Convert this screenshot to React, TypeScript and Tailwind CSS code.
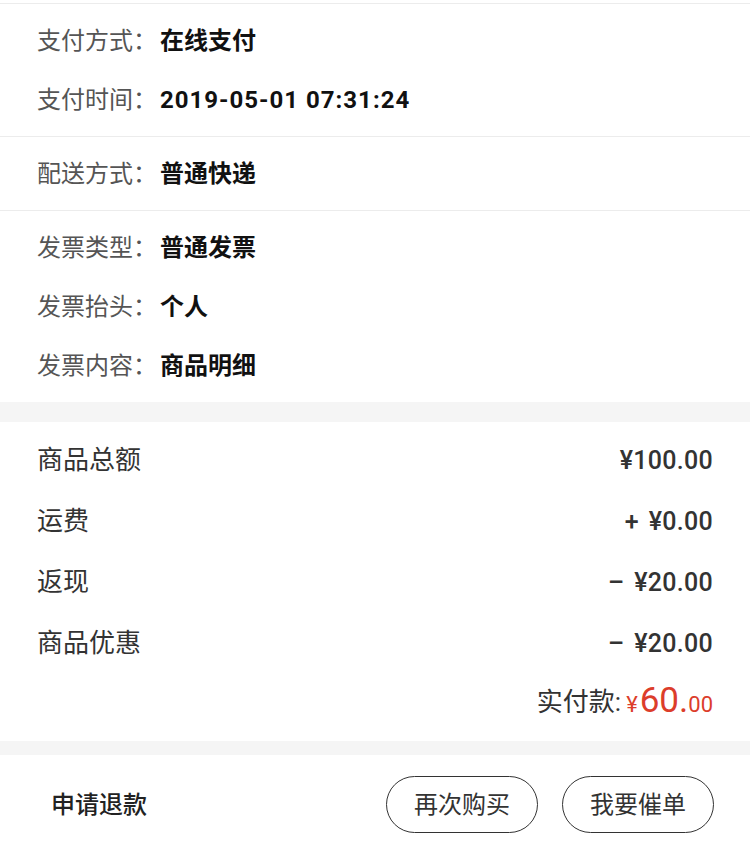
import React from 'react';

const font = { fontFamily: 'Roboto, "Noto Sans CJK SC", sans-serif' };

type Info = { label: string; value: string; mono?: boolean };

const groups: Info[][] = [
  [
    { label: '支付方式', value: '在线支付' },
    { label: '支付时间', value: '2019-05-01 07:31:24', mono: true },
  ],
  [{ label: '配送方式', value: '普通快递' }],
  [
    { label: '发票类型', value: '普通发票' },
    { label: '发票抬头', value: '个人' },
    { label: '发票内容', value: '商品明细' },
  ],
];

const prices = [
  { label: '商品总额', sign: '', value: '¥100.00' },
  { label: '运费', sign: '+', value: '¥0.00' },
  { label: '返现', sign: '–', value: '¥20.00' },
  { label: '商品优惠', sign: '–', value: '¥20.00' },
];

const App: React.FC = () => {
  return (
    <div className="w-[750px] h-[854px] bg-white overflow-hidden" style={font}>
      <div className="h-[3px]" />
      {groups.map((g, i) => (
        <div key={i} className="border-t border-[#ececec] py-[7px] px-[37px]">
          {g.map((row) => (
            <div key={row.label} className="h-[59px] flex items-center text-[24px]">
              <span className="w-[123px] shrink-0 text-[#555] whitespace-nowrap">{row.label}：</span>
              <span className={`text-[#111] font-bold ${row.mono ? 'tracking-[1px]' : ''}`}>{row.value}</span>
            </div>
          ))}
        </div>
      ))}

      <div className="h-[20px] bg-[#f5f5f5]" />

      <div className="pt-[8px] pb-[11px] px-[37px]">
        {prices.map((p) => (
          <div key={p.label} className="h-[61px] flex items-center justify-between text-[26px] text-[#333]">
            <span>{p.label}</span>
            <span className="font-medium text-[25px] flex items-center gap-[10px]">
              {p.sign && <span>{p.sign}</span>}
              <span className="tracking-[0.3px]">{p.value}</span>
            </span>
          </div>
        ))}
        <div className="h-[56px] flex items-center justify-end">
          <span className="text-[26px] text-[#333] mr-[5px]">实付款:</span>
          <span className="text-[#dc3d2b] flex items-baseline">
            <span className="text-[22px] mr-[2px]">¥</span>
            <span className="text-[35px] leading-none">60.</span>
            <span className="text-[22px]">00</span>
          </span>
        </div>
      </div>

      <div className="h-[14px] bg-[#f5f5f5]" />

      <div className="h-[99px] flex items-center px-[51px] pr-[36px]">
        <span className="text-[24px] font-medium text-[#222] flex-1">申请退款</span>
        <button className="w-[152px] h-[57px] rounded-full border border-[#333] text-[24px] text-[#333]">
          再次购买
        </button>
        <button className="w-[152px] h-[57px] rounded-full border border-[#333] text-[24px] text-[#333] ml-[24px]">
          我要催单
        </button>
      </div>
    </div>
  );
};

export default App;
